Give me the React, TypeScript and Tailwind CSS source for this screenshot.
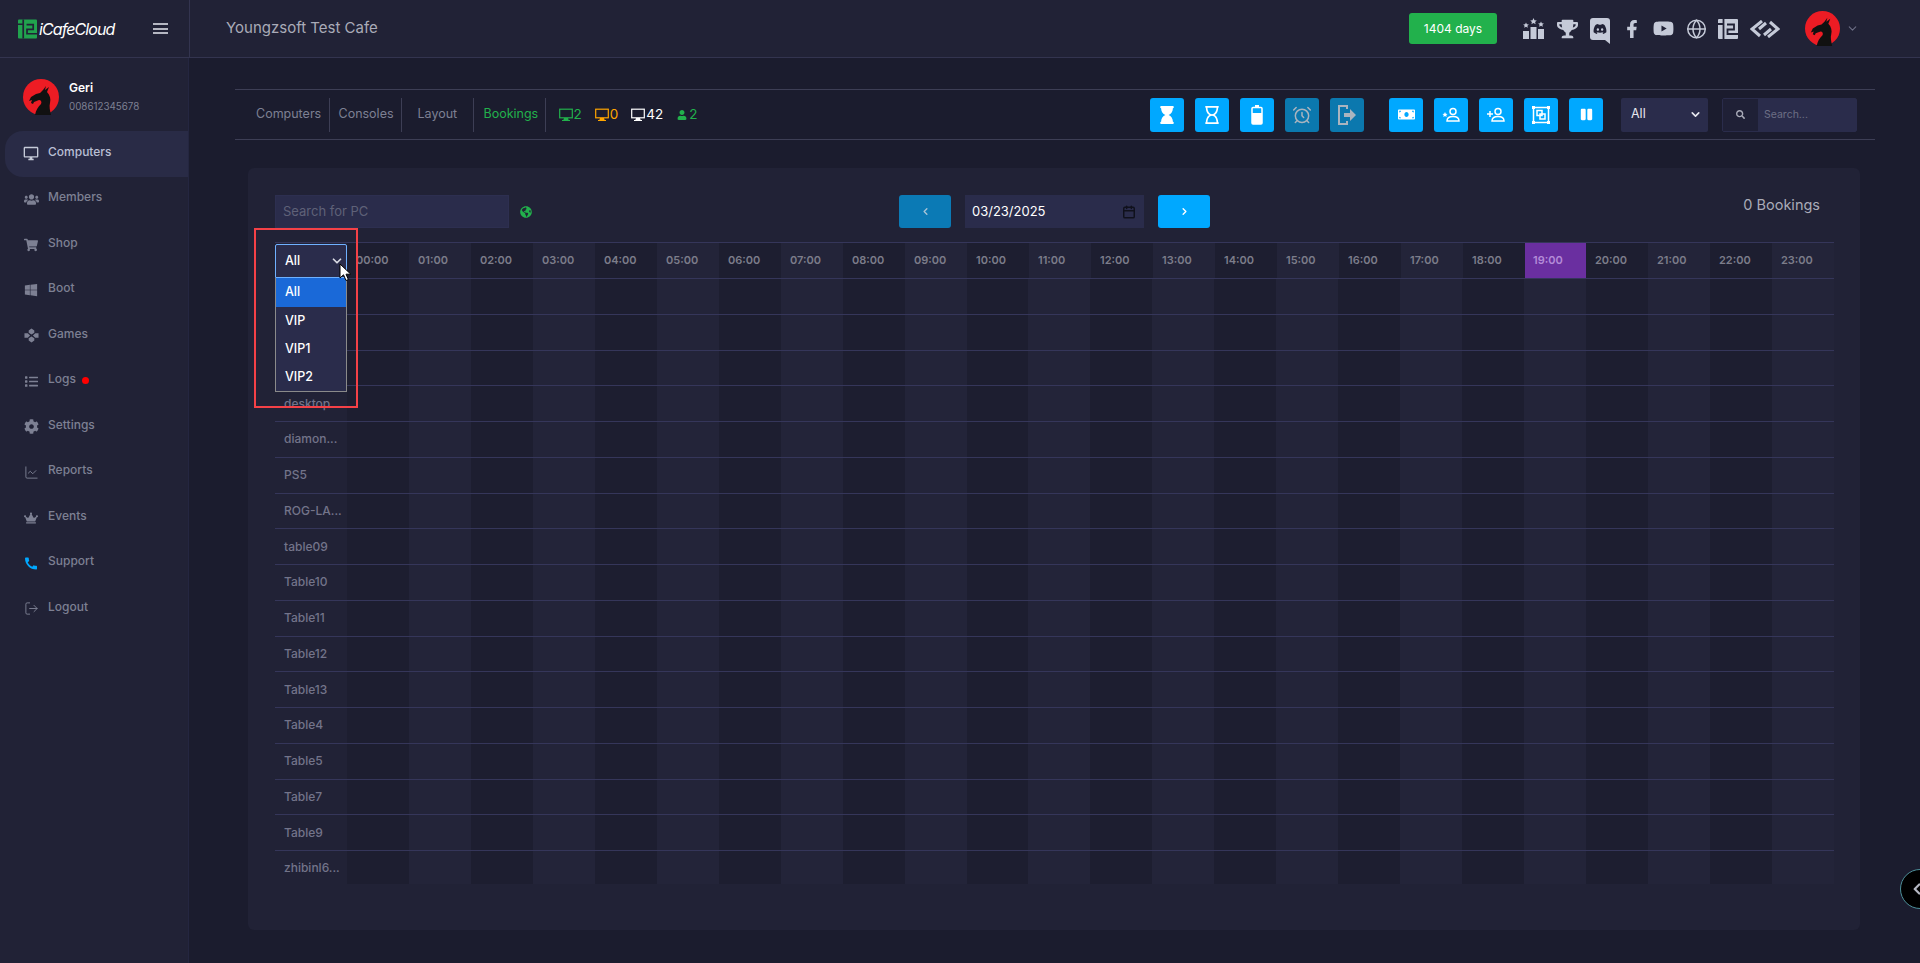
import type { ReactNode } from "react";
import {
  FaCog,
  FaCrown,
  FaDiscord,
  FaFacebookF,
  FaGlobeAmericas,
  FaHourglass,
  FaList,
  FaMoneyBill,
  FaPause,
  FaRegHourglass,
  FaSearch,
  FaShoppingCart,
  FaTrophy,
  FaUser,
  FaUsers,
  FaWindows,
  FaYoutube,
} from "react-icons/fa";
import { MdCall, MdOutlineDesktopWindows } from "react-icons/md";
import {
  AlarmClock,
  Calendar,
  ChevronDown,
  ChevronLeft,
  ChevronRight,
  Globe,
  LineChart,
  LogOut,
} from "lucide-react";

const HOURS = Array.from({ length: 24 }, (_, i) => String(i).padStart(2, "0") + ":00");
const PCS = [
  "",
  "",
  "",
  "desktop",
  "diamon...",
  "PS5",
  "ROG-LA...",
  "table09",
  "Table10",
  "Table11",
  "Table12",
  "Table13",
  "Table4",
  "Table5",
  "Table7",
  "Table9",
  "zhibinl6...",
];

function Dragon({ size }: { size: number }) {
  return (
    <svg width={size} height={size} viewBox="0 0 36 36" className="shrink-0">
      <circle cx="18" cy="18" r="18" fill="#ed1c24" />
      <path
        d="M12 36c1-5 3-8 6-11 1-2 0-4-2-4l-5 2-1 2-2-1 1-3-3 1 2-4 5-3 4-1 3-3 3-4-1 4 4-3-2 5c3 3 4 7 3 11-1 3 0 8 1 12z"
        fill="#111"
      />
    </svg>
  );
}

function GamesIcon() {
  return (
    <svg width="15" height="15" viewBox="0 0 16 16" fill="currentColor">
      <path d="M8 .5l3 2.2V5L8 7 5 5V2.700zM8 9l3 2v2.300l-3 2.200-3-2.200V11zM.5 5.500H4L6.500 8 4 10.500H.5zM15.500 5.500H12L9.500 8l2.500 2.500h3.500z" />
    </svg>
  );
}

function MonitorOutline({ className }: { className: string }) {
  return (
    <svg width="14" height="14" viewBox="0 0 14 14" fill="none" className={className}>
      <rect x="0.7" y="1.200" width="12.600" height="8.600" stroke="currentColor" strokeWidth="1.200" />
      <path d="M5 10h4l.6 2H11v1H3v-1h1.400z" fill="currentColor" />
    </svg>
  );
}

function Podium() {
  return (
    <svg width="23" height="21" viewBox="0 0 23 21" fill="currentColor">
      <rect x="1" y="13" width="6" height="8" />
      <rect x="8.500" y="9" width="6" height="12" />
      <rect x="16" y="11" width="6" height="10" />
      <path d="M11.500 0l1 2.200 2.300.2-1.700 1.500.5 2.300-2.100-1.200-2.100 1.200.5-2.300L8.200 2.400l2.300-.2zM4 4.500l.9 1.800 2 .2-1.500 1.300.4 2L4 8.800l-1.800 1 .4-2L1.100 6.500l2-.2zM19 3.500l.9 1.800 2 .2-1.500 1.300.4 2L19 7.800l-1.800 1 .4-2-1.500-1.300 2-.2z" />
    </svg>
  );
}

function DiscordBox() {
  return (
    <div className="relative w-[20px] h-[22px] bg-[#c5cad8] rounded-[3px] rounded-br-none flex items-center justify-center">
      <FaDiscord className="text-[14px] text-[#212236]" />
      <div className="absolute right-0 top-full w-0 h-0 border-l-[5px] border-l-transparent border-t-[4px] border-t-[#c5cad8]" />
    </div>
  );
}

function LogoMark({ w, h, color, gap }: { w: number; h: number; color: string; gap: string }) {
  return (
    <svg width={w} height={h} viewBox="0 0 20 20">
      <rect width="20" height="20" rx="1" fill={color} />
      <path d="M0 5h5M5.500 0v20M9 5.500h7v5H9.500v4.500H20" stroke={gap} strokeWidth="1.800" fill="none" />
    </svg>
  );
}

function SGlyph() {
  return (
    <svg width="30" height="18" viewBox="0 0 30 18" fill="none" stroke="#c5cad8" strokeWidth="3">
      <path d="M12 1L2 9l8 7M18 17l10-8-8-7M9 9l7-6M21 9l-7 6" />
    </svg>
  );
}

function FrameIcon() {
  return (
    <svg width="20" height="20" viewBox="0 0 20 20" fill="none" stroke="white" strokeWidth="1.500">
      <rect x="2.500" y="2.500" width="15" height="15" />
      <rect x="6" y="5.500" width="5" height="5" />
      <rect x="9" y="9" width="5" height="5" />
      <path d="M1 1h3v3H1zM16 1h3v3h-3zM1 16h3v3H1zM16 16h3v3h-3z" fill="white" stroke="none" />
    </svg>
  );
}

function PersonPlus({ star }: { star?: boolean }) {
  return (
    <svg width="18" height="16" viewBox="0 0 18 16" fill="none" stroke="white" strokeWidth="1.500">
      <circle cx="11" cy="4.500" r="3" />
      <path d="M5 14c0-3 2-4.500 6-4.500s6 1.500 6 4.500z" />
      {star ? (
        <path d="M3 5l.8 1.700 1.800.2-1.300 1.200.3 1.800L3 9l-1.600.9.300-1.800L.4 6.900l1.800-.2z" fill="white" stroke="none" />
      ) : (
        <path d="M3 4v6M0 7h6" />
      )}
    </svg>
  );
}

function BatteryIcon() {
  return (
    <svg width="12" height="20" viewBox="0 0 12 20">
      <path d="M4 0h4v2H4z" fill="white" />
      <rect x="1" y="2.500" width="10" height="16.500" rx="1" fill="none" stroke="white" strokeWidth="1.500" />
      <rect x="1" y="8" width="10" height="11" fill="white" />
    </svg>
  );
}

function DoorArrow() {
  return (
    <svg width="20" height="22" viewBox="0 0 20 22" fill="none" stroke="currentColor" strokeWidth="2">
      <path d="M10 5V2H2v18h8v-3" />
      <path d="M7 9h6V5l6 6-6 6v-4H7z" fill="currentColor" stroke="none" />
    </svg>
  );
}

function Cursor() {
  return (
    <svg width="13" height="19" viewBox="0 0 13 19">
      <path d="M1 1v14l3.500-3.200L7 17.500l2.400-1-2.400-5.300h4.800z" fill="white" stroke="black" strokeWidth="1" />
    </svg>
  );
}

function NavItem({
  icon,
  label,
  active,
  children,
}: {
  icon: ReactNode;
  label: string;
  active?: boolean;
  children?: ReactNode;
}) {
  return (
    <div
      className={
        active
          ? "h-[45.500px] ml-[5px] pl-[18px] flex items-center gap-[9px] rounded-l-[18px] bg-[#292b46] text-[#b9bfd4]"
          : "h-[45.500px] ml-[5px] pl-[18px] flex items-center gap-[9px] text-[#7d8093]"
      }
    >
      <span className="w-[16px] flex justify-center shrink-0">{icon}</span>
      <span className="text-[12px] font-medium -translate-y-[2px]">{label}</span>
      {children}
    </div>
  );
}

function Sidebar() {
  return (
    <aside className="w-[189px] shrink-0 bg-[#212236] border-r border-[#242640]">
      <div className="h-[73px] pl-[23px] pt-[21px] flex gap-[10px]">
        <Dragon size={36} />
        <div className="pt-[1px]">
          <div className="text-[12px] font-semibold text-white leading-[16px]">Geri</div>
          <div className="text-[9.800px] text-[#7d8093] leading-[16px] mt-[3px]">008612345678</div>
        </div>
      </div>
      <NavItem active icon={<MdOutlineDesktopWindows className="text-[17px] text-[#c5cad8]" />} label="Computers" />
      <NavItem icon={<FaUsers className="text-[15px]" />} label="Members" />
      <NavItem icon={<FaShoppingCart className="text-[14px]" />} label="Shop" />
      <NavItem icon={<FaWindows className="text-[14px]" />} label="Boot" />
      <NavItem icon={<GamesIcon />} label="Games" />
      <NavItem icon={<FaList className="text-[13px]" />} label="Logs">
        <span className="w-[7px] h-[7px] rounded-full bg-[#ff0000] -ml-[3px] -translate-y-[1px]" />
      </NavItem>
      <NavItem icon={<FaCog className="text-[15px]" />} label="Settings" />
      <NavItem icon={<LineChart size={15} strokeWidth={1.500} />} label="Reports" />
      <NavItem icon={<FaCrown className="text-[14px]" />} label="Events" />
      <NavItem icon={<MdCall className="text-[19px] text-[#00a8ff]" />} label="Support" />
      <NavItem icon={<LogOut size={15} strokeWidth={1.500} />} label="Logout" />
    </aside>
  );
}

function TopBar() {
  return (
    <header className="h-[58px] shrink-0 flex items-center bg-[#212236] border-b border-[#33344f]">
      <div className="w-[190px] h-full shrink-0 flex items-center border-r border-[#33344f] pl-[18px]">
        <LogoMark w={19} h={20} color="#21a34e" gap="#212236" />
        <span className="ml-[2px] text-[16px] italic text-white tracking-[-0.900px]">iCafeCloud</span>
        <span className="ml-[38px] flex flex-col gap-[2.500px] w-[15px]">
          <span className="h-[2px] bg-[#b5b7c2]" />
          <span className="h-[2px] bg-[#b5b7c2]" />
          <span className="h-[2px] bg-[#b5b7c2]" />
        </span>
      </div>
      <div className="ml-[36px] text-[15px] text-[#a9abb8] flex-1">Youngzsoft Test Cafe</div>
      <div className="w-[88px] h-[31px] rounded-[3px] bg-[#22b14c] text-white text-[12px] flex items-center justify-center">
        1404 days
      </div>
      <div className="ml-[25px] flex items-center gap-[11.500px] text-[#c5cad8] h-full w-[270px]">
        <span className="w-[23px] flex justify-center"><Podium /></span>
        <span className="w-[21px] flex justify-center"><FaTrophy className="text-[22px]" /></span>
        <span className="w-[21px] flex justify-center"><DiscordBox /></span>
        <span className="w-[20px] flex justify-center"><FaFacebookF className="text-[18px]" /></span>
        <span className="w-[21px] flex justify-center"><FaYoutube className="text-[23px]" /></span>
        <span className="w-[21px] flex justify-center"><Globe size={22} strokeWidth={1.700} /></span>
        <span className="w-[20px] flex justify-center"><LogoMark w={20} h={20} color="#c5cad8" gap="#212236" /></span>
        <span className="w-[30px] flex justify-center"><SGlyph /></span>
      </div>
      <div className="ml-[13px] flex items-center">
        <Dragon size={35} />
        <ChevronDown size={13} className="ml-[6px] text-[#6d6f85]" />
      </div>
      <div className="w-[61px]" />
    </header>
  );
}

function Tab({ label, green }: { label: string; green?: boolean }) {
  return (
    <div
      className={
        green
          ? "h-[34px] flex items-center text-[12.500px] text-[#22b14c]"
          : "h-[34px] flex items-center text-[12.500px] text-[#7d8093]"
      }
    >
      {label}
    </div>
  );
}

function ToolButton({ children, dim }: { children: ReactNode; dim?: boolean }) {
  return (
    <button
      className={
        dim
          ? "w-[34px] h-[34px] rounded-[3px] bg-[#0b78ae] text-[#a9b4bf] flex items-center justify-center"
          : "w-[34px] h-[34px] rounded-[3px] bg-[#00a8ff] text-white flex items-center justify-center"
      }
    >
      {children}
    </button>
  );
}

function TabBar() {
  return (
    <div className="h-[51px] flex items-center border-y border-[#3d3e55]">
      <div className="ml-[21px] w-[73.500px] border-r border-[#3d3e55]"><Tab label="Computers" /></div>
      <div className="pl-[9px] w-[72px] border-r border-[#3d3e55]"><Tab label="Consoles" /></div>
      <div className="pl-[16px] w-[72px] border-r border-[#3d3e55]"><Tab label="Layout" /></div>
      <div className="pl-[10px] w-[72px] border-r border-[#3d3e55]"><Tab label="Bookings" green /></div>
      <div className="ml-[13px] flex items-center text-[13.500px]">
        <MonitorOutline className="text-[#22b14c]" />
        <span className="text-[#22b14c] ml-[1px]">2</span>
        <MonitorOutline className="text-[#ffa500] ml-[13px]" />
        <span className="text-[#ffa500] ml-[1px]">0</span>
        <MonitorOutline className="text-white ml-[13px]" />
        <span className="text-white ml-[1px]">42</span>
        <FaUser className="text-[#22b14c] text-[10px] ml-[14px]" />
        <span className="text-[#22b14c] ml-[2px]">2</span>
      </div>
      <div className="ml-auto flex items-center">
        <div className="flex gap-[11px]">
          <ToolButton><FaHourglass className="text-[18px]" /></ToolButton>
          <ToolButton><FaRegHourglass className="text-[18px]" /></ToolButton>
          <ToolButton><BatteryIcon /></ToolButton>
          <ToolButton dim><AlarmClock size={20} strokeWidth={1.800} /></ToolButton>
          <ToolButton dim><DoorArrow /></ToolButton>
        </div>
        <div className="flex gap-[11px] ml-[25px]">
          <ToolButton><FaMoneyBill className="text-[17px]" /></ToolButton>
          <ToolButton><PersonPlus star /></ToolButton>
          <ToolButton><PersonPlus /></ToolButton>
          <ToolButton><FrameIcon /></ToolButton>
          <ToolButton><FaPause className="text-[13px]" /></ToolButton>
        </div>
        <div className="ml-[18px] w-[87px] h-[34px] pl-[10px] pr-[6px] flex items-center justify-between bg-[#2a2c4b] rounded-[2px] text-[12.500px] text-[#e6e7ee]">
          All
          <ChevronDown size={13} strokeWidth={3} className="text-[#e6e7ee]" />
        </div>
        <div className="ml-[14px] w-[135px] h-[34px] flex border border-[#2a2c4b] rounded-[2px]">
          <span className="w-[35px] flex items-center justify-center bg-[#1f2036] text-[#a9abb8]">
            <FaSearch className="text-[9px]" />
          </span>
          <span className="flex-1 bg-[#2a2c4b] pl-[6px] flex items-center text-[10.500px] text-[#6d6f85]">Search...</span>
        </div>
      </div>
      <div className="w-[18px]" />
    </div>
  );
}

function Toolbar() {
  return (
    <div className="flex h-[33px]">
      <div className="w-[624px] flex items-center">
        <div className="w-[234px] h-full pl-[7px] flex items-center bg-[#2a2c4b] text-[13px] text-[#5f6178] border border-[#2d2f50]">
          Search for PC
        </div>
        <FaGlobeAmericas className="ml-[11px] text-[12px] text-[#22b14c]" />
      </div>
      <div className="w-[52px] h-full rounded-[3px] bg-[#0b7ab5] flex items-center justify-center text-[#a9c4d6]">
        <ChevronLeft size={11} strokeWidth={3} />
      </div>
      <div className="ml-[14px] w-[179px] h-full pl-[7px] pr-[8px] flex items-center justify-between bg-[#2a2c4b] text-[13px] text-white">
        03/23/2025
        <Calendar size={14} strokeWidth={2.500} className="text-[#10111c]" />
      </div>
      <div className="ml-[14px] w-[52px] h-full rounded-[3px] bg-[#00a8ff] flex items-center justify-center text-white">
        <ChevronRight size={11} strokeWidth={3} />
      </div>
      <div className="flex-1 flex justify-end pr-[14px] text-[14.500px] text-[#a9abb8] -translate-y-[7px] items-center">
        0 Bookings
      </div>
    </div>
  );
}

function Grid() {
  return (
    <div className="relative mt-[14px] border-t border-[#35365a]">
      <div className="flex h-[36px] border-b border-[#35365a]">
        <div className="w-[72px] shrink-0" />
        {HOURS.map((h, i) => (
          <div
            key={h}
            className={
              i === 19
                ? "flex-1 pl-[8px] flex items-center text-[11px] font-semibold bg-[#6a2fa0] text-[#b48bd8]"
                : i % 2 === 0
                  ? "flex-1 pl-[9px] flex items-center text-[11px] font-semibold bg-[#1d1e30] text-[#7c7d8a]"
                  : "flex-1 pl-[9px] flex items-center text-[11px] font-semibold bg-[#232439] text-[#7c7d8a]"
            }
          >
            {h}
          </div>
        ))}
      </div>
      {PCS.map((name, r) => (
        <div
          key={r}
          className={
            r === PCS.length - 1
              ? "flex h-[33px]"
              : "flex h-[35.750px] border-b border-[#35365a]"
          }
        >
          <div className="w-[72px] shrink-0 pl-[9px] flex items-center text-[12px] font-medium text-[#73748a]">{name}</div>
          {HOURS.map((h, i) => (
            <div key={h} className={i % 2 === 0 ? "flex-1 bg-[#1d1e30]" : "flex-1 bg-[#232439]"} />
          ))}
        </div>
      ))}

      <div className="absolute left-0 top-[1px] w-[72px] text-[12.500px] font-medium text-white">
        <div className="h-[34px] pl-[9px] pr-[2px] flex items-center justify-between bg-[#2a2c4b] border border-[#6fb1ff] rounded-t-[2px]">
          All
          <ChevronDown size={14} strokeWidth={3} className="text-[#d8d9e2]" />
        </div>
        <div className="h-[114px] bg-[#2a2c4b] border border-t-0 border-[#8a8a8a]">
          <div className="h-[29px] pl-[9px] flex items-center bg-[#1a69d8]">All</div>
          <div className="h-[28px] pl-[9px] flex items-center">VIP</div>
          <div className="h-[28px] pl-[9px] flex items-center">VIP1</div>
          <div className="h-[28px] pl-[9px] flex items-center">VIP2</div>
        </div>
      </div>
      <div className="absolute left-[-21px] top-[-15px] w-[104px] h-[180px] border-2 border-[#f44147] pointer-events-none" />
      <div className="absolute left-[64px] top-[20px]"><Cursor /></div>
    </div>
  );
}

export default function App() {
  return (
    <div className="relative w-full h-[963px] overflow-hidden flex flex-col bg-[#1b1c2e] font-['Inter','Liberation_Sans',sans-serif]">
      <TopBar />
      <div className="flex flex-1 min-h-0">
        <Sidebar />
        <main className="flex-1 pl-[46px] pr-[45px] pt-[31px]">
          <TabBar />
          <div className="mt-[28px] ml-[13px] mr-[15px] h-[762px] rounded-[6px] bg-[#212236] pl-[27px] pr-[26px] pt-[27px]">
            <Toolbar />
            <Grid />
          </div>
        </main>
      </div>
      <div className="absolute left-[1900px] top-[869px] w-[40px] h-[40px] rounded-full bg-black border border-[#4d8f99] flex items-center pl-[7px] text-[#b5b7c2]">
        <ChevronLeft size={18} strokeWidth={3} />
      </div>
    </div>
  );
}
